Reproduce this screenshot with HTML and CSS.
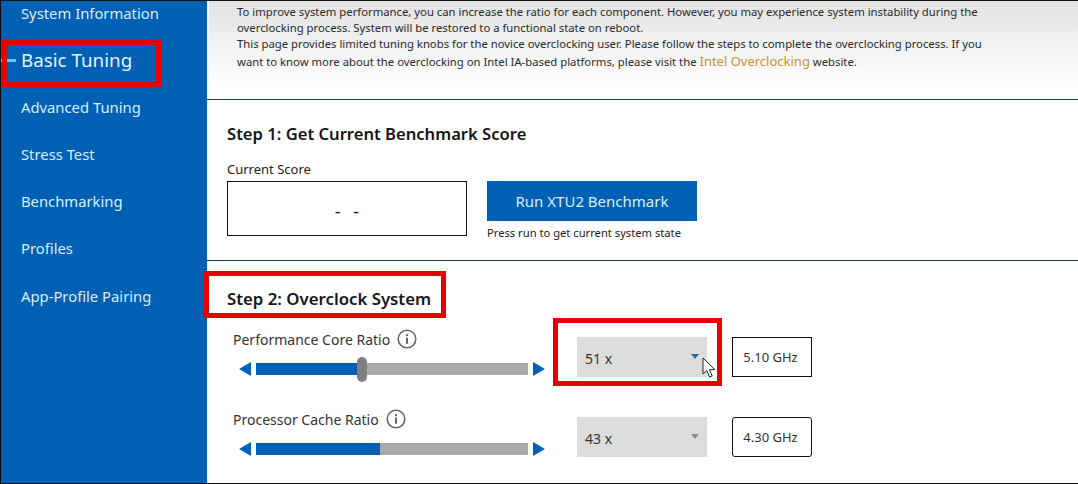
FILE: index.html
```html
<!DOCTYPE html>
<html lang="en">
<head>
<meta charset="utf-8">
<title>Basic Tuning</title>
<link rel="stylesheet" href="styles.css">
</head>
<body>
<div class="app">
  <nav class="side">
    <a class="nav-item">System Information</a>
    <a class="nav-item active">Basic Tuning</a>
    <a class="nav-item">Advanced Tuning</a>
    <a class="nav-item">Stress Test</a>
    <a class="nav-item">Benchmarking</a>
    <a class="nav-item">Profiles</a>
    <a class="nav-item">App-Profile Pairing</a>
  </nav>
  <main class="main">
    <section class="intro">
      <p class="intro-a">To improve system performance, you can increase the ratio for each component. However, you may experience system instability during the<br>overclocking process. System will be restored to a functional state on reboot.</p>
      <p class="intro-b">This page provides limited tuning knobs for the novice overclocking user. Please follow the steps to complete the overclocking process. If you</p>
      <p class="intro-c">want to know more about the overclocking on Intel IA-based platforms, please visit the <span class="link">Intel Overclocking</span> website.</p>
    </section>
    <section class="step1">
      <h2 class="step-title">Step 1: Get Current Benchmark Score</h2>
      <div class="score-label">Current Score</div>
      <div class="score-row">
        <div class="score-box"><span>- -</span></div>
        <div class="run">
          <div class="run-btn">Run XTU2 Benchmark</div>
          <div class="run-note">Press run to get current system state</div>
        </div>
      </div>
    </section>
    <section class="step2">
      <h2 class="step-title step-title-2">Step 2: Overclock System</h2>
      <div class="ratio">
        <div class="ratio-left">
          <div class="ratio-label">Performance Core Ratio
            <svg class="info" viewBox="0 0 20 20"><circle cx="10" cy="10" r="8.8" fill="none" stroke="#666" stroke-width="1.6"/><rect x="9.1" y="8.6" width="1.8" height="6.2" fill="#555"/><rect x="9.1" y="5.2" width="1.8" height="1.9" fill="#555"/></svg>
          </div>
          <div class="slider">
            <span class="arrow-l"></span>
            <div class="track"><div class="fill fill-a"></div><div class="thumb"></div></div>
            <span class="arrow-r"></span>
          </div>
        </div>
        <div class="select"><span>51 x</span><i class="caret caret-blue"></i></div>
        <div class="ghz">5.10 GHz</div>
      </div>
      <div class="ratio">
        <div class="ratio-left">
          <div class="ratio-label">Processor Cache Ratio
            <svg class="info" viewBox="0 0 20 20"><circle cx="10" cy="10" r="8.8" fill="none" stroke="#666" stroke-width="1.6"/><rect x="9.1" y="8.6" width="1.8" height="6.2" fill="#555"/><rect x="9.1" y="5.2" width="1.8" height="1.9" fill="#555"/></svg>
          </div>
          <div class="slider">
            <span class="arrow-l"></span>
            <div class="track"><div class="fill fill-b"></div></div>
            <span class="arrow-r"></span>
          </div>
        </div>
        <div class="select"><span>43 x</span><i class="caret caret-grey"></i></div>
        <div class="ghz ghz-round">4.30 GHz</div>
      </div>
    </section>
  </main>
</div>
<div class="mark mark-nav"></div>
<div class="mark mark-step"></div>
<div class="mark mark-select"></div>
<svg class="cursor" viewBox="0 0 14 22"><path d="M1 1 L1 17 L4.8 13.6 L7.6 20 L10.2 18.9 L7.5 12.8 L12.6 12.4 Z" fill="#fff" stroke="#222" stroke-width="1" stroke-linejoin="round"/></svg>
</body>
</html>
```
FILE: styles.css
```css
* { box-sizing: border-box; }
html, body { margin: 0; padding: 0; }
body {
  width: 1078px;
  height: 484px;
  overflow: hidden;
  position: relative;
  background: #000;
  font-family: "Noto Sans", "Open Sans", sans-serif;
  color: #222;
}
.app {
  display: flex;
  width: 1078px;
  height: 484px;
  border-top: 1px solid #111;
  border-bottom: 1px solid #111;
  border-left: 1px solid #111;
}
.side {
  width: 206px;
  flex: none;
  background: #0060b4;
  display: flex;
  flex-direction: column;
}
.nav-item {
  padding-left: 20px;
  display: flex;
  align-items: center;
  color: #d9eefc;
  font-size: 14.8px;
  height: 24px;
  margin-bottom: 23px;
}
.nav-item:last-child { margin-top: 1px; }
.nav-item.active {
  font-size: 18.8px;
  color: #e4f4ff;
  position: relative;
}
.nav-item.active::before {
  content: "";
  position: absolute;
  left: 0;
  top: 11px;
  width: 15px;
  height: 3px;
  background: #6cc0f5;
}
.main {
  flex: 1;
  background: #fff;
  display: flex;
  flex-direction: column;
  min-width: 0;
}
.intro {
  height: 99px;
  flex: none;
  padding: 3px 0 0 30px;
  background: linear-gradient(#e2e2e2, #fff 85%);
  border-bottom: 1px solid #16465f;
  font-size: 11.3px;
  color: #2a2a2a;
  white-space: nowrap;
  box-shadow: inset 2px 0 0 #eefaff;
}
.intro p { margin: 0; }
.intro-a, .intro-b { line-height: 16px; }
.intro-c { line-height: 20px; margin-top: -1px !important; }
.link { color: #c4952e; font-size: 13px; }
.step1 {
  height: 161px;
  flex: none;
  padding: 21px 0 0 20px;
  border-bottom: 1px solid #16334a;
  box-shadow: inset 2px 0 0 #eefaff;
}
.step-title {
  margin: 0;
  font-size: 16.6px;
  font-weight: 600;
  line-height: 26px;
  color: #151515;
}
.step-title-2 { font-size: 16.8px; margin-bottom: 25px; }
.score-label {
  font-size: 13px;
  line-height: 18px;
  margin-top: 13px;
  color: #222;
}
.score-row { display: flex; gap: 20px; margin-top: 3px; }
.score-box {
  width: 240px;
  height: 55px;
  border: 1px solid #111;
  display: flex;
  align-items: center;
  justify-content: center;
  font-size: 18px;
  word-spacing: 8px;
  padding-top: 4px;
}
.run-btn {
  width: 210px;
  height: 40px;
  background: #0060b4;
  color: #d9eefc;
  font-size: 15px;
  display: flex;
  align-items: center;
  justify-content: center;
}
.run-note { font-size: 11.2px; line-height: 16px; margin-top: 4px; color: #222; }
.step2 { flex: 1; padding: 25px 0 0 20px; min-height: 0; box-shadow: inset 2px 0 0 #eefaff; }
.ratio { display: flex; height: 80px; }
.ratio-left { width: 350px; flex: none; padding-left: 6px; margin-top: -10px; }
.ratio-label {
  display: flex;
  align-items: center;
  gap: 7px;
  height: 24px;
  font-size: 14px;
  color: #333;
}
.info { width: 20px; height: 20px; flex: none; }
.slider { display: flex; align-items: center; gap: 5px; margin-top: 6px; padding-left: 6px; height: 24px; }
.arrow-l, .arrow-r { width: 0; height: 0; border-top: 7px solid transparent; border-bottom: 7px solid transparent; flex: none; }
.arrow-l { border-right: 12px solid #0060b4; }
.arrow-r { border-left: 12px solid #0060b4; }
.track { width: 272px; height: 12px; background: #aaa; position: relative; }
.fill { height: 12px; background: #0060b4; }
.fill-a { width: 106px; }
.fill-b { width: 124px; }
.thumb { position: absolute; left: 101px; top: -6px; width: 10px; height: 25px; background: #808080; border-radius: 5px; }
.select {
  width: 130px;
  height: 40px;
  background: #dcdcdc;
  position: relative;
  display: flex;
  align-items: center;
  padding: 2px 0 0 8px;
  font-size: 14px;
  color: #333;
  flex: none;
}
.caret { position: absolute; right: 8px; top: 17px; width: 0; height: 0; border-left: 4px solid transparent; border-right: 4px solid transparent; border-top: 5px solid; }
.caret-blue { border-top-color: #1f6ba8; }
.caret-grey { border-top-color: #8a8a8a; }
.ghz {
  width: 80px;
  height: 40px;
  margin-left: 25px;
  border: 1px solid #111;
  display: flex;
  align-items: center;
  justify-content: center;
  padding-right: 3px;
  font-size: 13px;
  color: #333;
  flex: none;
}
.ghz-round { border-radius: 3px; }
.mark { position: absolute; border: 5px solid #e60000; }
.mark-nav { left: 2px; top: 40px; width: 159px; height: 47px; }
.mark-step { left: 204px; top: 271px; width: 242px; height: 47px; }
.mark-select { left: 553px; top: 318px; width: 169px; height: 68px; }
.cursor { position: absolute; left: 702px; top: 357px; width: 14px; height: 22px; }
```
